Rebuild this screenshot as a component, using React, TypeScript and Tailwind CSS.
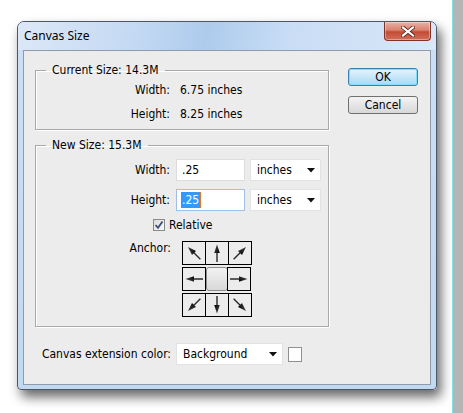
import React from 'react'

const UI_FONT = { fontFamily: '"DejaVu Sans Condensed", "Liberation Sans", sans-serif' }
const TITLE_FONT = { fontFamily: '"Noto Sans", "Open Sans", sans-serif' }

// angle in degrees, 0 = pointing up
function Arrow({ angle }: { angle: number }) {
  return (
    <svg width="22" height="22" viewBox="0 0 22 22">
      <defs>
        <linearGradient id={`ag${angle}`} x1="0" y1="0" x2="1" y2="1">
          <stop offset="0" stopColor="#555" />
          <stop offset="1" stopColor="#000" />
        </linearGradient>
      </defs>
      <g transform={`rotate(${angle} 11 11)`}>
        <line x1="11" y1="20" x2="11" y2="9" stroke="#2a2a2a" strokeWidth="1.4" />
        <polygon points="11,2.5 8.2,11 13.8,11" fill={`url(#ag${angle})`} />
      </g>
    </svg>
  )
}

function Cell({ angle, first }: { angle: number; first?: boolean }) {
  return (
    <div
      className={`w-[24px] h-[24px] border border-black bg-[#ececec] flex items-center justify-center ${
        first ? '' : '-ml-px'
      }`}
    >
      <Arrow angle={angle} />
    </div>
  )
}

function SelectBox({ label, width }: { label: string; width: string }) {
  return (
    <div
      className={`${width} h-[22px] bg-white border border-[#e2e2e2] flex items-center justify-between pl-[6px] pr-[5px]`}
    >
      <span className="text-[12px] text-black leading-none">{label}</span>
      <svg width="8" height="5" viewBox="0 0 8 5">
        <polygon points="0,0 8,0 4,4.5" fill="#111" />
      </svg>
    </div>
  )
}

export default function App() {
  return (
    <div className="w-[463px] h-[413px] bg-white flex overflow-hidden" style={UI_FONT}>
      <div className="w-[452px] h-full pl-[17px] pt-[21px]">
        {/* window */}
        <div className="w-[420px] h-[369px] rounded-t-[7px] rounded-b-[4px] border border-[#4d5866] bg-gradient-to-b from-[#cbdff6] to-[#c3d8f1] shadow-[4px_7px_12px_rgba(0,0,0,0.6)] flex flex-col overflow-hidden">
          {/* title bar */}
          <div className="h-[28px] flex justify-between bg-[linear-gradient(100deg,#dce8f7_0%,#c2d8f2_30%,#aecbed_45%,#c9ddf5_65%,#d9e7f8_100%)]">
            <span className="self-center pl-[6px] text-[12px] text-black leading-none" style={TITLE_FONT}>
              Canvas Size
            </span>
            <div className="self-start mr-[5px] w-[47px] h-[19px] rounded-b-[4px] border border-t-0 border-[#7d3325] bg-[linear-gradient(to_bottom,#eab2a5_0%,#d9826f_45%,#c24c36_55%,#d0705a_100%)] flex items-center justify-center shadow-[inset_0_0_0_1px_rgba(255,255,255,0.35)]">
              <svg width="14" height="11" viewBox="0 0 14 11">
                <path d="M2 1.5 L12 9.5 M12 1.5 L2 9.5" stroke="#5a2418" strokeWidth="3.8" strokeLinecap="square" />
                <path d="M2 1.5 L12 9.5 M12 1.5 L2 9.5" stroke="#fff" strokeWidth="2.2" strokeLinecap="square" />
              </svg>
            </div>
          </div>

          {/* client area */}
          <div className="mx-[5px] w-[408px] h-[335px] border border-[#8e9bab] bg-[#ececec] flex">
            <div className="pl-[11px] flex flex-col">
              {/* Current size */}
              <fieldset className="mt-[12px] w-[294px] h-[67px] border border-[#a9a9a9] shadow-[inset_1px_1px_0_#fff,1px_1px_0_#fff]">
                <legend className="ml-[10px] px-[6px] text-[12px] leading-[14px] text-black">
                  Current Size: 14.3M
                </legend>
                <div className="mt-px grid grid-cols-[134px_1fr] gap-x-[10px] text-[12px] leading-[24px] text-black">
                  <span className="text-right">Width:</span>
                  <span>6.75 inches</span>
                  <span className="text-right">Height:</span>
                  <span>8.25 inches</span>
                </div>
              </fieldset>

              {/* New size */}
              <fieldset className="mt-[8px] w-[294px] h-[189px] border border-[#a9a9a9] shadow-[inset_1px_1px_0_#fff,1px_1px_0_#fff]">
                <legend className="ml-[10px] px-[6px] text-[12px] leading-[14px] text-black">
                  New Size: 15.3M
                </legend>
                <div className="mt-[7px] grid grid-cols-[135px_69px_71px] gap-x-[5px] gap-y-[8px] items-center text-[12px] text-black">
                  <span className="text-right mr-[1px]">Width:</span>
                  <div className="h-[22px] bg-white border border-[#dcdcdc] flex items-center pl-[5px]">.25</div>
                  <SelectBox label="inches" width="w-[71px]" />

                  <span className="text-right mr-[1px]">Height:</span>
                  <div className="h-[22px] bg-white border border-[#9fc0e3] flex items-center pl-[4px]">
                    <span className="bg-[#3399ff] text-white leading-[16px] px-px">.25</span>
                    <span className="w-px h-[16px] bg-[#e4791f]" />
                  </div>
                  <SelectBox label="inches" width="w-[71px]" />
                </div>

                <div className="mt-[7px] ml-[117px] h-[14px] flex items-center gap-[4px] text-[12px] text-black">
                  <div className="w-[12px] h-[12px] border border-[#8a8a8a] bg-gradient-to-br from-[#dcdcdc] to-[#fafafa] flex items-center justify-center">
                    <svg width="10" height="10" viewBox="0 0 10 10">
                      <path d="M1.5 5 L4 7.8 L8.5 1.5" fill="none" stroke="#3d4f78" strokeWidth="1.8" />
                    </svg>
                  </div>
                  <span>Relative</span>
                </div>

                <div className="mt-[9px] flex">
                  <span className="w-[135px] text-right text-[12px] leading-[14px] text-black">Anchor:</span>
                  <div className="ml-[11px] flex flex-col gap-[2px]">
                    <div className="flex">
                      <Cell angle={-45} first />
                      <Cell angle={0} />
                      <Cell angle={45} />
                    </div>
                    <div className="flex">
                      <Cell angle={-90} first />
                      <div className="w-[22px] h-[24px] rounded-[3px] border border-[#8c8c8c] bg-gradient-to-b from-[#f2f2f2] to-[#d9d9d9]" />
                      <Cell angle={90} />
                    </div>
                    <div className="flex">
                      <Cell angle={-135} first />
                      <Cell angle={180} />
                      <Cell angle={135} />
                    </div>
                  </div>
                </div>
              </fieldset>

              {/* extension color */}
              <div className="mt-[16px] flex items-center text-[12px] text-black">
                <span className="w-[136px] text-right">Canvas extension color:</span>
                <div className="ml-[5px]">
                  <SelectBox label="Background" width="w-[107px]" />
                </div>
                <div className="ml-[5px] w-[14px] h-[15px] bg-white border border-[#8f8f8f]" />
              </div>
            </div>

            {/* buttons */}
            <div className="ml-[19px] pt-[17px] flex flex-col gap-[10px]">
              <button className="w-[70px] h-[18px] rounded-[3px] border border-[#3c7fb1] bg-gradient-to-b from-[#e5f4fc] to-[#a7d9f5] shadow-[inset_0_0_0_1px_#7ee0f8] text-[12px] leading-none text-black">
                OK
              </button>
              <button className="w-[70px] h-[18px] rounded-[3px] border border-[#707070] bg-gradient-to-b from-[#f3f3f3] to-[#d8d8d8] text-[12px] leading-none text-black">
                Cancel
              </button>
            </div>
          </div>
        </div>
      </div>
      <div className="w-px h-full bg-[#7fe2e6]" />
      <div className="flex-1 h-full bg-[#b5b5b5]" />
    </div>
  )
}
